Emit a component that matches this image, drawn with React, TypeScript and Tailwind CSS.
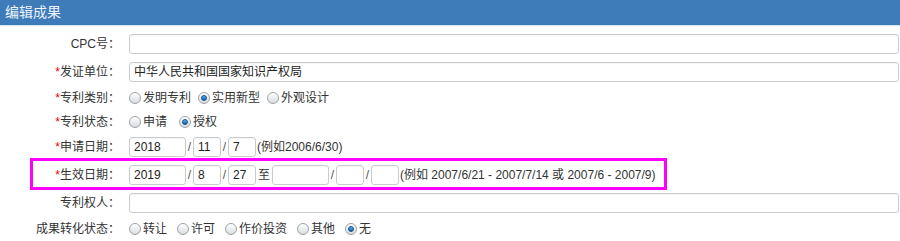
const FONT = {
  fontFamily: '"Liberation Sans", Arial, "Noto Sans CJK SC", sans-serif',
};

function Label({ text, required }: { text: string; required?: boolean }) {
  return (
    <div className="w-[120px] shrink-0 text-right text-[12px] text-[#333] whitespace-nowrap">
      {required && <span className="text-[#e00]">*</span>}
      {text}：
    </div>
  );
}

function Input({ value = "", w }: { value?: string; w: string }) {
  return (
    <div
      className={`${w} h-[20px] shrink-0 border border-[#c8ccd1] rounded-[3px] bg-white px-[4px] text-[12px] leading-[18px] text-[#222] shadow-[inset_0_1px_1px_rgba(0,0,0,0.04)]`}
    >
      {value}
    </div>
  );
}

function Radio({ checked }: { checked?: boolean }) {
  return (
    <span className="relative inline-flex w-[12px] h-[12px] shrink-0 items-center justify-center rounded-full border border-[#9da3a8] bg-gradient-to-b from-[#ffffff] to-[#d9dcdf]">
      {checked && (
        <span className="w-[6px] h-[6px] rounded-full border border-[#0c4f8c] bg-gradient-to-b from-[#5fb0f0] to-[#0d63b0]" />
      )}
    </span>
  );
}

function Option({
  text,
  checked,
  gap,
}: {
  text: string;
  checked?: boolean;
  gap: string;
}) {
  return (
    <span className={`inline-flex items-center ${gap}`}>
      <Radio checked={checked} />
      <span className="ml-[2px] text-[12px] text-[#333]">{text}</span>
    </span>
  );
}

function Slash() {
  return <span className="w-[7px] text-center text-[12px] text-[#555]">/</span>;
}

export default function App() {
  return (
    <div
      className="relative w-[900px] h-[241px] overflow-hidden bg-white"
      style={FONT}
    >
      <div className="h-[25px] bg-[#3d7bb9] pl-[5px] text-[14px] leading-[25px] text-[#eef3f9]">
        编辑成果
      </div>
      <div className="h-px bg-[#d8e5f2]" />

      <div className="pt-[4px]">
        <div className="flex h-[28px] items-center">
          <Label text="CPC号" />
          <div className="ml-[9px]">
            <Input w="w-[770px]" />
          </div>
        </div>

        <div className="flex h-[28px] items-center">
          <Label text="发证单位" required />
          <div className="ml-[9px]">
            <Input w="w-[770px]" value="中华人民共和国国家知识产权局" />
          </div>
        </div>

        <div className="flex h-[24px] items-center">
          <Label text="专利类别" required />
          <div className="ml-[9px] flex items-center">
            <Option text="发明专利" gap="mr-[7px]" />
            <Option text="实用新型" checked gap="mr-[7px]" />
            <Option text="外观设计" gap="" />
          </div>
        </div>

        <div className="flex h-[23px] items-center">
          <Label text="专利状态" required />
          <div className="ml-[9px] flex items-center">
            <Option text="申请" gap="mr-[12px]" />
            <Option text="授权" checked gap="" />
          </div>
        </div>

        <div className="flex h-[28px] items-center">
          <Label text="申请日期" required />
          <div className="ml-[9px] flex items-center">
            <Input w="w-[57px]" value="2018" />
            <Slash />
            <Input w="w-[28px]" value="11" />
            <Slash />
            <Input w="w-[28px]" value="7" />
            <span className="ml-px text-[12px] text-[#333]">(例如2006/6/30)</span>
          </div>
        </div>

        <div className="flex h-[28px] items-center">
          <Label text="生效日期" required />
          <div className="ml-[9px] flex items-center">
            <Input w="w-[57px]" value="2019" />
            <Slash />
            <Input w="w-[28px]" value="8" />
            <Slash />
            <Input w="w-[28px]" value="27" />
            <span className="mx-[2px] text-[12px] text-[#333]">至</span>
            <Input w="w-[57px]" />
            <Slash />
            <Input w="w-[28px]" />
            <Slash />
            <Input w="w-[28px]" />
            <span className="ml-px text-[12px] text-[#333]">
              (例如 2007/6/21 - 2007/7/14 或 2007/6 - 2007/9)
            </span>
          </div>
        </div>

        <div className="flex h-[28px] items-center">
          <Label text="专利权人" />
          <div className="ml-[9px]">
            <Input w="w-[770px]" />
          </div>
        </div>

        <div className="flex h-[24px] items-center">
          <Label text="成果转化状态" />
          <div className="ml-[9px] flex items-center">
            <Option text="转让" gap="mr-[10px]" />
            <Option text="许可" gap="mr-[10px]" />
            <Option text="作价投资" gap="mr-[10px]" />
            <Option text="其他" gap="mr-[10px]" />
            <Option text="无" checked gap="" />
          </div>
        </div>
      </div>

      <div className="absolute left-[30px] top-[158px] w-[637px] h-[32px] border-[3px] border-[#f0f] pointer-events-none" />
    </div>
  );
}
